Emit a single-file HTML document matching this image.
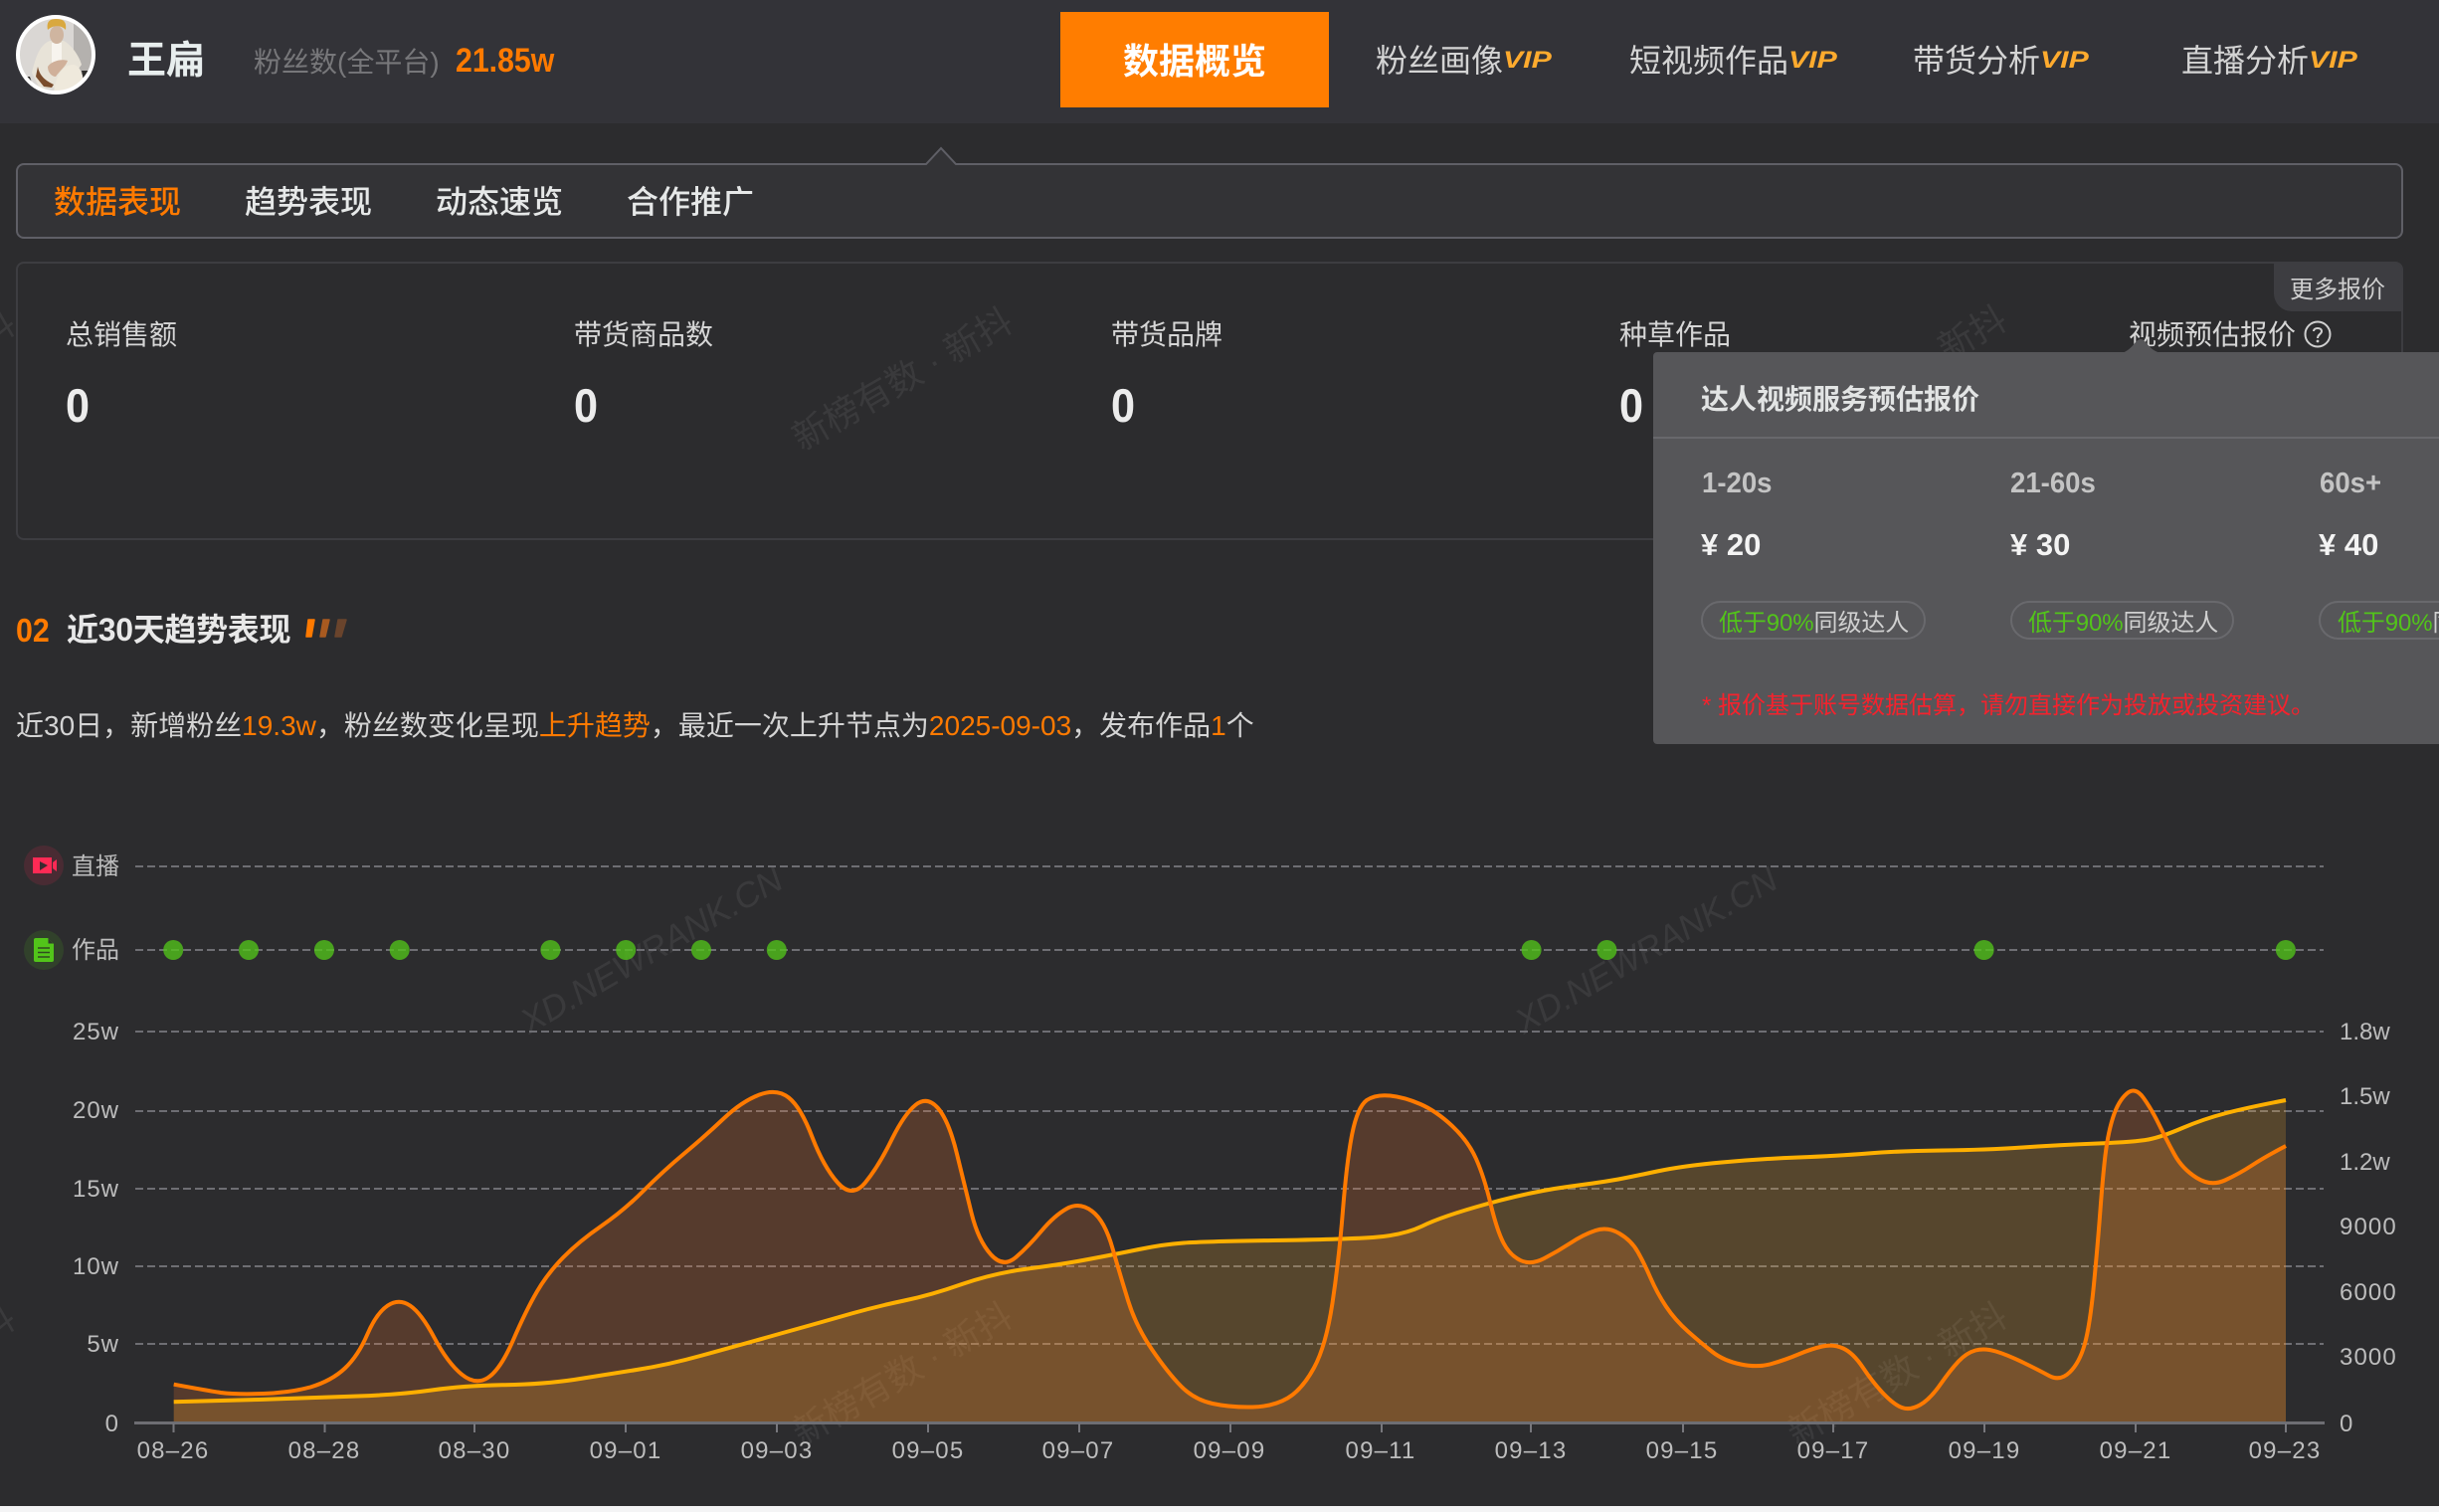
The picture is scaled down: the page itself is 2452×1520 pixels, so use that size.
<!DOCTYPE html>
<html lang="zh-CN">
<head>
<meta charset="utf-8">
<title>王扁 数据概览</title>
<style>
html,body{margin:0;padding:0;background:#2c2c2e;}
body{width:2452px;height:1520px;position:relative;overflow:hidden;font-family:"Liberation Sans","Noto Sans CJK SC",sans-serif;color:#d8d8d8;}
.t{position:absolute;white-space:nowrap;line-height:1;}
.o{color:#ff7a00;}
.hd{position:absolute;left:0;top:0;width:2452px;height:124px;background:#333338;}
.active{position:absolute;left:1066px;top:12px;width:270px;height:96px;background:#ff7d00;}
.vip{display:inline-block;font-style:italic;font-weight:700;font-size:24px;color:#ffab2e;transform:scaleX(1.26);transform-origin:0 50%;vertical-align:4px;width:48px;letter-spacing:0;}
.nav{font-size:32px;color:#d4d4d4;}
.tabs{position:absolute;left:16px;top:164px;width:2400px;height:76px;box-sizing:border-box;border:2px solid #5f5f66;border-radius:8px;background:#333336;}
.card{position:absolute;left:16px;top:263px;width:2400px;height:280px;box-sizing:border-box;border:2px solid #3d3d41;border-radius:8px;}
.more{position:absolute;left:2286px;top:264px;width:129px;height:49px;background:#3d3d41;border-bottom-left-radius:18px;border-top-right-radius:8px;}
.lab{font-size:28px;color:#d6d6d6;}
.val{font-size:47px;font-weight:700;color:#ececec;transform:scaleX(.92);transform-origin:0 50%;}
.tip{position:absolute;left:1662px;top:354px;width:800px;height:394px;background:#565659;border-radius:4px;}
.dv{position:absolute;left:1662px;top:438px;width:800px;height:2px;background:#68686c;}
.badge{position:absolute;top:604px;height:39px;box-sizing:border-box;border:2px solid #69696d;border-radius:20px;}
.g{color:#52c41a;}
.dur{font-size:29px;font-weight:700;color:#c4c4c4;transform:scaleX(.95);transform-origin:0 50%;}
.pr{font-size:31px;font-weight:700;color:#f4f4f4;}
.bt{font-size:24px;color:#d0d0d0;top:615px;letter-spacing:-.1px;}
</style>
</head>
<body>
<!-- header -->
<div class="hd"></div>
<svg style="position:absolute;left:16px;top:15px" width="80" height="80" viewBox="0 0 80 80">
  <defs><clipPath id="av"><circle cx="40" cy="40" r="37"/></clipPath></defs>
  <g clip-path="url(#av)">
    <rect width="80" height="80" fill="#dad7d4"/>
    <rect x="58" y="0" width="22" height="60" fill="#b4b1ae"/>
    <path d="M0 62H14L18 74H0Z M66 56H80V66H68Z" fill="#2e2c2a"/>
    <path d="M16 58 C20 42 24 30 34 26 L48 26 C56 30 64 42 66 50 L60 58 L62 72 L24 74Z" fill="#e8e3d8"/>
    <path d="M36 28 L46 28 L46 50 L36 50Z" fill="#f7f4ee"/>
    <ellipse cx="41" cy="20" rx="7" ry="9" fill="#cfb5a0"/>
    <path d="M32 15 C30 5 36 4 41 4 C48 4 51 7 50 15 C46 10 37 10 32 15Z" fill="#d9a83f"/>
    <path d="M22 52 C24 62 30 66 38 70 L36 73 L28 72 L20 62Z" fill="#7a4c2c"/>
    <path d="M38 78 C40 62 46 50 58 50 C68 52 68 68 66 78Z" fill="#efe9dc"/>
    <path d="M32 52 C36 46 46 44 52 46 C50 52 44 56 40 62 C36 62 32 58 32 52Z" fill="#d0b09a"/>
  </g>
  <circle cx="40" cy="40" r="38" fill="none" stroke="#fff" stroke-width="4"/>
</svg>
<div class="t" style="left:128px;top:42px;font-size:39px;font-weight:700;color:#e8eeee;">王扁</div>
<div class="t" style="left:255px;top:49px;font-size:28px;color:#77777a;">粉丝数(全平台)</div>
<div class="t o" style="left:458px;top:44px;font-size:34px;font-weight:700;transform:scaleX(.89);transform-origin:0 50%;">21.85w</div>

<div class="active"></div>
<div class="t" style="left:1129px;top:44px;font-size:36px;font-weight:700;color:#fff;">数据概览</div>
<div class="t nav" style="left:1383px;top:45px;">粉丝画像<span class="vip">VIP</span></div>
<div class="t nav" style="left:1638px;top:45px;">短视频作品<span class="vip">VIP</span></div>
<div class="t nav" style="left:1923px;top:45px;">带货分析<span class="vip">VIP</span></div>
<div class="t nav" style="left:2193px;top:45px;">直播分析<span class="vip">VIP</span></div>

<!-- tabs -->
<div class="tabs"></div>
<svg style="position:absolute;left:925px;top:146px" width="44" height="24" viewBox="0 0 44 24"><path d="M4 20 L21 3 L38 20 L42 20 L42 22 L2 22 L2 20Z" fill="#333336"/><path d="M2 19 L6 19 L21 3 L36 19 L42 19" fill="none" stroke="#5f5f66" stroke-width="2"/></svg>
<div class="t o" style="left:54px;top:187px;font-size:32px;font-weight:500;">数据表现</div>
<div class="t" style="left:246px;top:187px;font-size:32px;font-weight:500;color:#e6e8e8;">趋势表现</div>
<div class="t" style="left:438px;top:187px;font-size:32px;font-weight:500;color:#e6e8e8;">动态速览</div>
<div class="t" style="left:630px;top:187px;font-size:32px;font-weight:500;color:#e6e8e8;">合作推广</div>

<!-- data card -->
<div class="card"></div>
<div class="more"></div>
<div class="t" style="left:2302px;top:280px;font-size:24px;color:#cfcfcf;">更多报价</div>
<div class="t lab" style="left:66px;top:323px;">总销售额</div>
<div class="t lab" style="left:577px;top:323px;">带货商品数</div>
<div class="t lab" style="left:1117px;top:323px;">带货品牌</div>
<div class="t lab" style="left:1628px;top:323px;">种草作品</div>
<div class="t lab" style="left:2140px;top:323px;">视频预估报价</div>
<svg style="position:absolute;left:2316px;top:322px" width="28" height="28" viewBox="0 0 28 28"><circle cx="14" cy="14" r="12.500" fill="none" stroke="#d0d0d0" stroke-width="2"/><path d="M10 11 C10 7 18 7 18 11 C18 14 14 14 14 18" fill="none" stroke="#d0d0d0" stroke-width="2"/><circle cx="14" cy="21" r="1.400" fill="#d0d0d0"/></svg>
<div class="t val" style="left:66px;top:384px;">0</div>
<div class="t val" style="left:577px;top:384px;">0</div>
<div class="t val" style="left:1117px;top:384px;">0</div>
<div class="t val" style="left:1628px;top:384px;">0</div>

<!-- section title -->
<div class="t o" style="left:16px;top:617px;font-size:33px;font-weight:700;transform:scaleX(.92);transform-origin:0 50%;">02</div>
<div class="t" style="left:67px;top:617px;font-size:32px;font-weight:700;color:#e8e8e8;letter-spacing:-.3px;">近30天趋势表现</div>
<svg style="position:absolute;left:305px;top:620px" width="50" height="24" viewBox="0 0 50 24">
  <path d="M5 3 L11 3 L8 20 L3 20Z" fill="#ff7a00" stroke="#ff7a00" stroke-width="1.500" stroke-linejoin="round"/>
  <path d="M20 3 L26 3 L22 20 L17 20Z" fill="#a85a20" stroke="#a85a20" stroke-width="1.500" stroke-linejoin="round"/>
  <path d="M35 3 L43 3 L38 20 L32 20Z" fill="#6a442c" stroke="#6a442c" stroke-width="1.500" stroke-linejoin="round"/>
</svg>
<div class="t" style="left:16px;top:716px;font-size:28px;color:#d4d4d4;">近30日，新增粉丝<span class="o">19.3w</span>，粉丝数变化呈现<span class="o">上升趋势</span>，最近一次上升节点为<span class="o">2025-09-03</span>，发布作品<span class="o">1</span>个</div>

<!-- chart -->
<svg style="position:absolute;left:0;top:0" width="2452" height="1520" viewBox="0 0 2452 1520" font-family="'Liberation Sans','Noto Sans CJK SC',sans-serif">
  <g fill="#ffffff" fill-opacity=".07" font-size="36">
    <text transform="translate(806 454) rotate(-30)">新榜有数 · 新抖</text>
    <text transform="translate(1958 364) rotate(-30)">新抖</text>
    <text transform="translate(806 1454) rotate(-30)">新榜有数 · 新抖</text>
    <text transform="translate(1806 1454) rotate(-30)">新榜有数 · 新抖</text>
    <text transform="translate(-44 368) rotate(-30)">新抖</text>
    <text transform="translate(-44 1368) rotate(-30)">新抖</text>
    <text font-size="35" font-style="italic" transform="translate(532 1040) rotate(-30)">XD.NEWRANK.CN</text>
    <text font-size="35" font-style="italic" transform="translate(1532 1040) rotate(-30)">XD.NEWRANK.CN</text>
  </g>
  <g stroke="#6e6e73" stroke-width="2" stroke-dasharray="8 4" fill="none">
    <path d="M136 871H2336"/><path d="M136 955H2336"/>
    <path d="M136 1037H2336"/><path d="M136 1117H2336"/><path d="M136 1195H2336"/><path d="M136 1273H2336"/><path d="M136 1351H2336"/>
  </g>
  <!-- icons -->
  <circle cx="44" cy="870" r="20" fill="#ff2a55" fill-opacity=".14"/>
  <path d="M33 862H52V878H33Z M53 867L57 864V876L53 873Z" fill="#ff2a55"/>
  <path d="M40 866L48 870L40 875Z" fill="#3a2a30"/>
  <circle cx="44" cy="955" r="20" fill="#52c41a" fill-opacity=".14"/>
  <path d="M36 943H48L54 949V965a2 2 0 0 1-2 2H36a2 2 0 0 1-2-2V945a2 2 0 0 1 2-2Z" fill="#52c41a"/>
  <path d="M48.500 943.500L53.500 948.500H48.500Z" fill="#2f3a2a"/>
  <path d="M38 953H50M38 957.500H50M38 962H50" stroke="#2f4a20" stroke-width="1.600"/>
  <g font-size="24" fill="#bdbdbd">
    <text x="72" y="879">直播</text>
    <text x="72" y="963">作品</text>
  </g>
  <g fill="#52c41a" fill-opacity=".78">
    <circle cx="174.200" cy="955" r="10"/><circle cx="250" cy="955" r="10"/><circle cx="325.900" cy="955" r="10"/><circle cx="401.700" cy="955" r="10"/>
    <circle cx="553.400" cy="955" r="10"/><circle cx="629.200" cy="955" r="10"/><circle cx="705" cy="955" r="10"/><circle cx="780.800" cy="955" r="10"/>
    <circle cx="1539.600" cy="955" r="10"/><circle cx="1615.400" cy="955" r="10"/><circle cx="1994.600" cy="955" r="10"/><circle cx="2297.900" cy="955" r="10"/>
  </g>
  <!-- areas -->
  <path fill="#ff7a2c" fill-opacity=".2" d="M174.700 1430V1391.700Q206 1397.500 222 1400Q238 1402 264.500 1401Q291 1400 312 1394.500Q333.500 1388 346.750 1375.500Q360 1363 369.250 1341.500Q378.500 1320 389.750 1312.500Q401 1305 412.250 1312.500Q423.500 1320 436.750 1345Q450 1370 464 1381.500Q478 1393 490.500 1385Q503 1377 516 1347Q529 1317 539.800 1298.500Q550.600 1280 566.300 1264Q582 1248 604.500 1232.500Q627 1217 647 1197Q667 1177 688 1159.500Q709 1142 727.500 1124.500Q746 1107 763.500 1100.500Q781 1094 793 1103.500Q805 1113 816.500 1143Q828 1173 842.250 1189Q856.500 1205 869.750 1189Q883 1173 896 1146.500Q909 1120 920.500 1110.750Q932 1101.500 943 1114Q954 1127 962 1160Q970 1193 976.750 1220Q983.500 1247 996 1261Q1008.400 1275 1021.200 1264Q1034 1253 1047 1237.500Q1060 1222 1072.500 1215Q1085 1208 1097.800 1217.500Q1110.600 1227 1118.500 1255Q1126.500 1283 1134.250 1308Q1142 1333 1158 1356.500Q1174 1380 1187.300 1393.500Q1200.600 1407 1219 1411Q1237.600 1415 1259 1414.500Q1280 1414 1294.500 1405.500Q1309 1397 1321 1375Q1333 1353 1339.500 1310Q1346 1267 1350 1217Q1354 1167 1359.300 1140Q1364.700 1113 1374 1106Q1383 1100 1397.500 1101.500Q1412 1103 1428 1110Q1444 1117 1460 1132Q1476 1147 1484 1165Q1492 1183 1498.500 1210Q1505 1237 1511.500 1249.500Q1518 1262 1528.500 1267Q1539 1272 1552.500 1265Q1566 1258 1579 1249.500Q1592 1241 1604 1237Q1616 1233 1628 1240Q1640 1247 1646.500 1258.500Q1653 1270 1659.500 1285Q1666 1300 1675 1313.500Q1684 1327 1697 1338.500Q1710 1350 1721.500 1359Q1733 1368 1750 1371.500Q1767 1375 1781 1371Q1795 1367 1808 1361.500Q1821 1356 1832 1353.500Q1843 1351 1853 1355.500Q1863 1360 1873 1375Q1883 1390 1893.500 1401Q1904 1412 1912 1415Q1920 1418 1930 1412.500Q1940 1407 1950.500 1392Q1961 1377 1969 1368.500Q1977 1360 1986 1357.500Q1995 1355 2006.500 1358.500Q2018 1362 2033.500 1369.500Q2049 1377 2060 1383Q2071 1389 2080.750 1379.500Q2090.500 1370 2095.750 1351.500Q2101 1333 2105 1291.500Q2109 1250 2111.500 1216.500Q2114 1183 2116.500 1161.500Q2119 1140 2124.200 1123.500Q2129.400 1107 2138 1099.500Q2146.500 1092 2154.750 1103.500Q2163 1115 2170.800 1131Q2178.600 1147 2186.300 1161Q2194 1175 2208.300 1184Q2222.600 1193 2236.800 1186.500Q2251 1180 2264 1171.500Q2277 1163 2298 1152V1430Z"/>
  <path fill="#ffb02c" fill-opacity=".2" d="M174.700 1430V1409.300L260 1407Q317.600 1405 360 1403.500Q402 1402 434 1397.500Q466 1393 505 1392.300Q545 1391.700 577 1387Q609 1382 640 1377Q672 1372 706 1362.500Q741 1353 785 1340.500Q830 1328 856 1320.500Q883 1313 909 1307.500Q936 1302 967 1291Q999 1280 1033 1275.500Q1068 1271 1094 1266Q1121 1261 1145 1256Q1169 1251 1190 1249.500Q1211 1248 1280 1247Q1349 1246 1380 1244Q1410 1242 1430 1232.500Q1449 1223 1494 1210.500Q1539 1198 1576 1193Q1613.500 1188 1627 1185.500Q1640 1183 1666 1177.500Q1692 1172 1731 1168.500Q1769.500 1165 1808 1163.500Q1847 1162 1878 1159.500Q1909 1157 1953 1156.500Q1997 1156 2033.500 1153.500Q2070 1151 2109 1149.500Q2147.500 1148 2160 1145.500Q2173 1143 2194 1134Q2215 1125 2238 1119Q2261 1113 2298 1106V1430Z"/>
  <!-- lines -->
  <path fill="none" stroke="#ffb000" stroke-width="4" d="M174.700 1409.300L260 1407Q317.600 1405 360 1403.500Q402 1402 434 1397.500Q466 1393 505 1392.300Q545 1391.700 577 1387Q609 1382 640 1377Q672 1372 706 1362.500Q741 1353 785 1340.500Q830 1328 856 1320.500Q883 1313 909 1307.500Q936 1302 967 1291Q999 1280 1033 1275.500Q1068 1271 1094 1266Q1121 1261 1145 1256Q1169 1251 1190 1249.500Q1211 1248 1280 1247Q1349 1246 1380 1244Q1410 1242 1430 1232.500Q1449 1223 1494 1210.500Q1539 1198 1576 1193Q1613.500 1188 1627 1185.500Q1640 1183 1666 1177.500Q1692 1172 1731 1168.500Q1769.500 1165 1808 1163.500Q1847 1162 1878 1159.500Q1909 1157 1953 1156.500Q1997 1156 2033.500 1153.500Q2070 1151 2109 1149.500Q2147.500 1148 2160 1145.500Q2173 1143 2194 1134Q2215 1125 2238 1119Q2261 1113 2298 1106"/>
  <path fill="none" stroke="#ff7a00" stroke-width="4" d="M174.700 1391.700Q206 1397.500 222 1400Q238 1402 264.500 1401Q291 1400 312 1394.500Q333.500 1388 346.750 1375.500Q360 1363 369.250 1341.500Q378.500 1320 389.750 1312.500Q401 1305 412.250 1312.500Q423.500 1320 436.750 1345Q450 1370 464 1381.500Q478 1393 490.500 1385Q503 1377 516 1347Q529 1317 539.800 1298.500Q550.600 1280 566.300 1264Q582 1248 604.500 1232.500Q627 1217 647 1197Q667 1177 688 1159.500Q709 1142 727.500 1124.500Q746 1107 763.500 1100.500Q781 1094 793 1103.500Q805 1113 816.500 1143Q828 1173 842.250 1189Q856.500 1205 869.750 1189Q883 1173 896 1146.500Q909 1120 920.500 1110.750Q932 1101.500 943 1114Q954 1127 962 1160Q970 1193 976.750 1220Q983.500 1247 996 1261Q1008.400 1275 1021.200 1264Q1034 1253 1047 1237.500Q1060 1222 1072.500 1215Q1085 1208 1097.800 1217.500Q1110.600 1227 1118.500 1255Q1126.500 1283 1134.250 1308Q1142 1333 1158 1356.500Q1174 1380 1187.300 1393.500Q1200.600 1407 1219 1411Q1237.600 1415 1259 1414.500Q1280 1414 1294.500 1405.500Q1309 1397 1321 1375Q1333 1353 1339.500 1310Q1346 1267 1350 1217Q1354 1167 1359.300 1140Q1364.700 1113 1374 1106Q1383 1100 1397.500 1101.500Q1412 1103 1428 1110Q1444 1117 1460 1132Q1476 1147 1484 1165Q1492 1183 1498.500 1210Q1505 1237 1511.500 1249.500Q1518 1262 1528.500 1267Q1539 1272 1552.500 1265Q1566 1258 1579 1249.500Q1592 1241 1604 1237Q1616 1233 1628 1240Q1640 1247 1646.500 1258.500Q1653 1270 1659.500 1285Q1666 1300 1675 1313.500Q1684 1327 1697 1338.500Q1710 1350 1721.500 1359Q1733 1368 1750 1371.500Q1767 1375 1781 1371Q1795 1367 1808 1361.500Q1821 1356 1832 1353.500Q1843 1351 1853 1355.500Q1863 1360 1873 1375Q1883 1390 1893.500 1401Q1904 1412 1912 1415Q1920 1418 1930 1412.500Q1940 1407 1950.500 1392Q1961 1377 1969 1368.500Q1977 1360 1986 1357.500Q1995 1355 2006.500 1358.500Q2018 1362 2033.500 1369.500Q2049 1377 2060 1383Q2071 1389 2080.750 1379.500Q2090.500 1370 2095.750 1351.500Q2101 1333 2105 1291.500Q2109 1250 2111.500 1216.500Q2114 1183 2116.500 1161.500Q2119 1140 2124.200 1123.500Q2129.400 1107 2138 1099.500Q2146.500 1092 2154.750 1103.500Q2163 1115 2170.800 1131Q2178.600 1147 2186.300 1161Q2194 1175 2208.300 1184Q2222.600 1193 2236.800 1186.500Q2251 1180 2264 1171.500Q2277 1163 2298 1152"/>
  <!-- axis -->
  <path d="M135 1430.500H2337" stroke="#6e6e73" stroke-width="3"/>
  <path d="M174.500 1431V1440M326.500 1431V1440M477 1431V1440M629 1431V1440M781 1431V1440M933 1431V1440M1085 1431V1440M1237 1431V1440M1389 1431V1440M1539 1431V1440M1692 1431V1440M1843 1431V1440M1995 1431V1440M2147 1431V1440M2298 1431V1440" stroke="#77777c" stroke-width="2"/>
  <g font-size="24" fill="#bdbdbd" text-anchor="end" letter-spacing="1">
    <text x="120" y="1045">25w</text><text x="120" y="1124">20w</text><text x="120" y="1203">15w</text><text x="120" y="1281">10w</text><text x="120" y="1359">5w</text><text x="120" y="1439">0</text>
  </g>
  <g font-size="24" fill="#bdbdbd">
    <text x="2352" y="1045">1.8w</text><text x="2352" y="1110">1.5w</text><text x="2352" y="1176">1.2w</text><text x="2352" y="1241" letter-spacing="1.100">9000</text><text x="2352" y="1307" letter-spacing="1.100">6000</text><text x="2352" y="1372" letter-spacing="1.100">3000</text><text x="2352" y="1439">0</text>
  </g>
  <g font-size="24" fill="#bdbdbd" text-anchor="middle" letter-spacing="1.200">
    <text x="174" y="1466">08–26</text><text x="326" y="1466">08–28</text><text x="477" y="1466">08–30</text><text x="629" y="1466">09–01</text><text x="781" y="1466">09–03</text><text x="933" y="1466">09–05</text><text x="1084" y="1466">09–07</text><text x="1236" y="1466">09–09</text><text x="1388" y="1466">09–11</text><text x="1539" y="1466">09–13</text><text x="1691" y="1466">09–15</text><text x="1843" y="1466">09–17</text><text x="1995" y="1466">09–19</text><text x="2147" y="1466">09–21</text><text x="2297" y="1466">09–23</text>
  </g>
</svg>

<!-- tooltip -->
<svg style="position:absolute;left:2128px;top:338px" width="50" height="18" viewBox="0 0 50 18"><path d="M4 17 C10 16 14 12 19 6 C22 2 26 2 29 6 C34 12 38 16 46 17Z" fill="#565659"/></svg>
<div class="tip"></div>
<div class="dv" style="top:439px"></div>
<div class="t" style="left:1710px;top:388px;font-size:28px;font-weight:700;color:#e2e4e4;">达人视频服务预估报价</div>
<div class="t dur" style="left:1711px;top:472px;">1-20s</div>
<div class="t dur" style="left:2021px;top:472px;">21-60s</div>
<div class="t dur" style="left:2332px;top:472px;">60s+</div>
<div class="t pr" style="left:1710px;top:532px;">¥ 20</div>
<div class="t pr" style="left:2021px;top:532px;">¥ 30</div>
<div class="t pr" style="left:2331px;top:532px;">¥ 40</div>
<div class="badge" style="left:1710px;width:226px;"></div>
<div class="badge" style="left:2021px;width:225px;"></div>
<div class="badge" style="left:2331px;width:226px;"></div>
<div class="t bt" style="left:1728px;"><span class="g">低于90%</span>同级达人</div>
<div class="t bt" style="left:2039px;"><span class="g">低于90%</span>同级达人</div>
<div class="t bt" style="left:2350px;"><span class="g">低于90%</span>同级达人</div>
<div class="t" style="left:1711px;top:698px;font-size:24px;color:#f5222d;">* 报价基于账号数据估算，请勿直接作为投放或投资建议。</div>

<!-- page bottom strip -->
<div style="position:absolute;left:0;top:1514px;width:2452px;height:6px;background:#f4f4f5;"></div>
</body>
</html>
